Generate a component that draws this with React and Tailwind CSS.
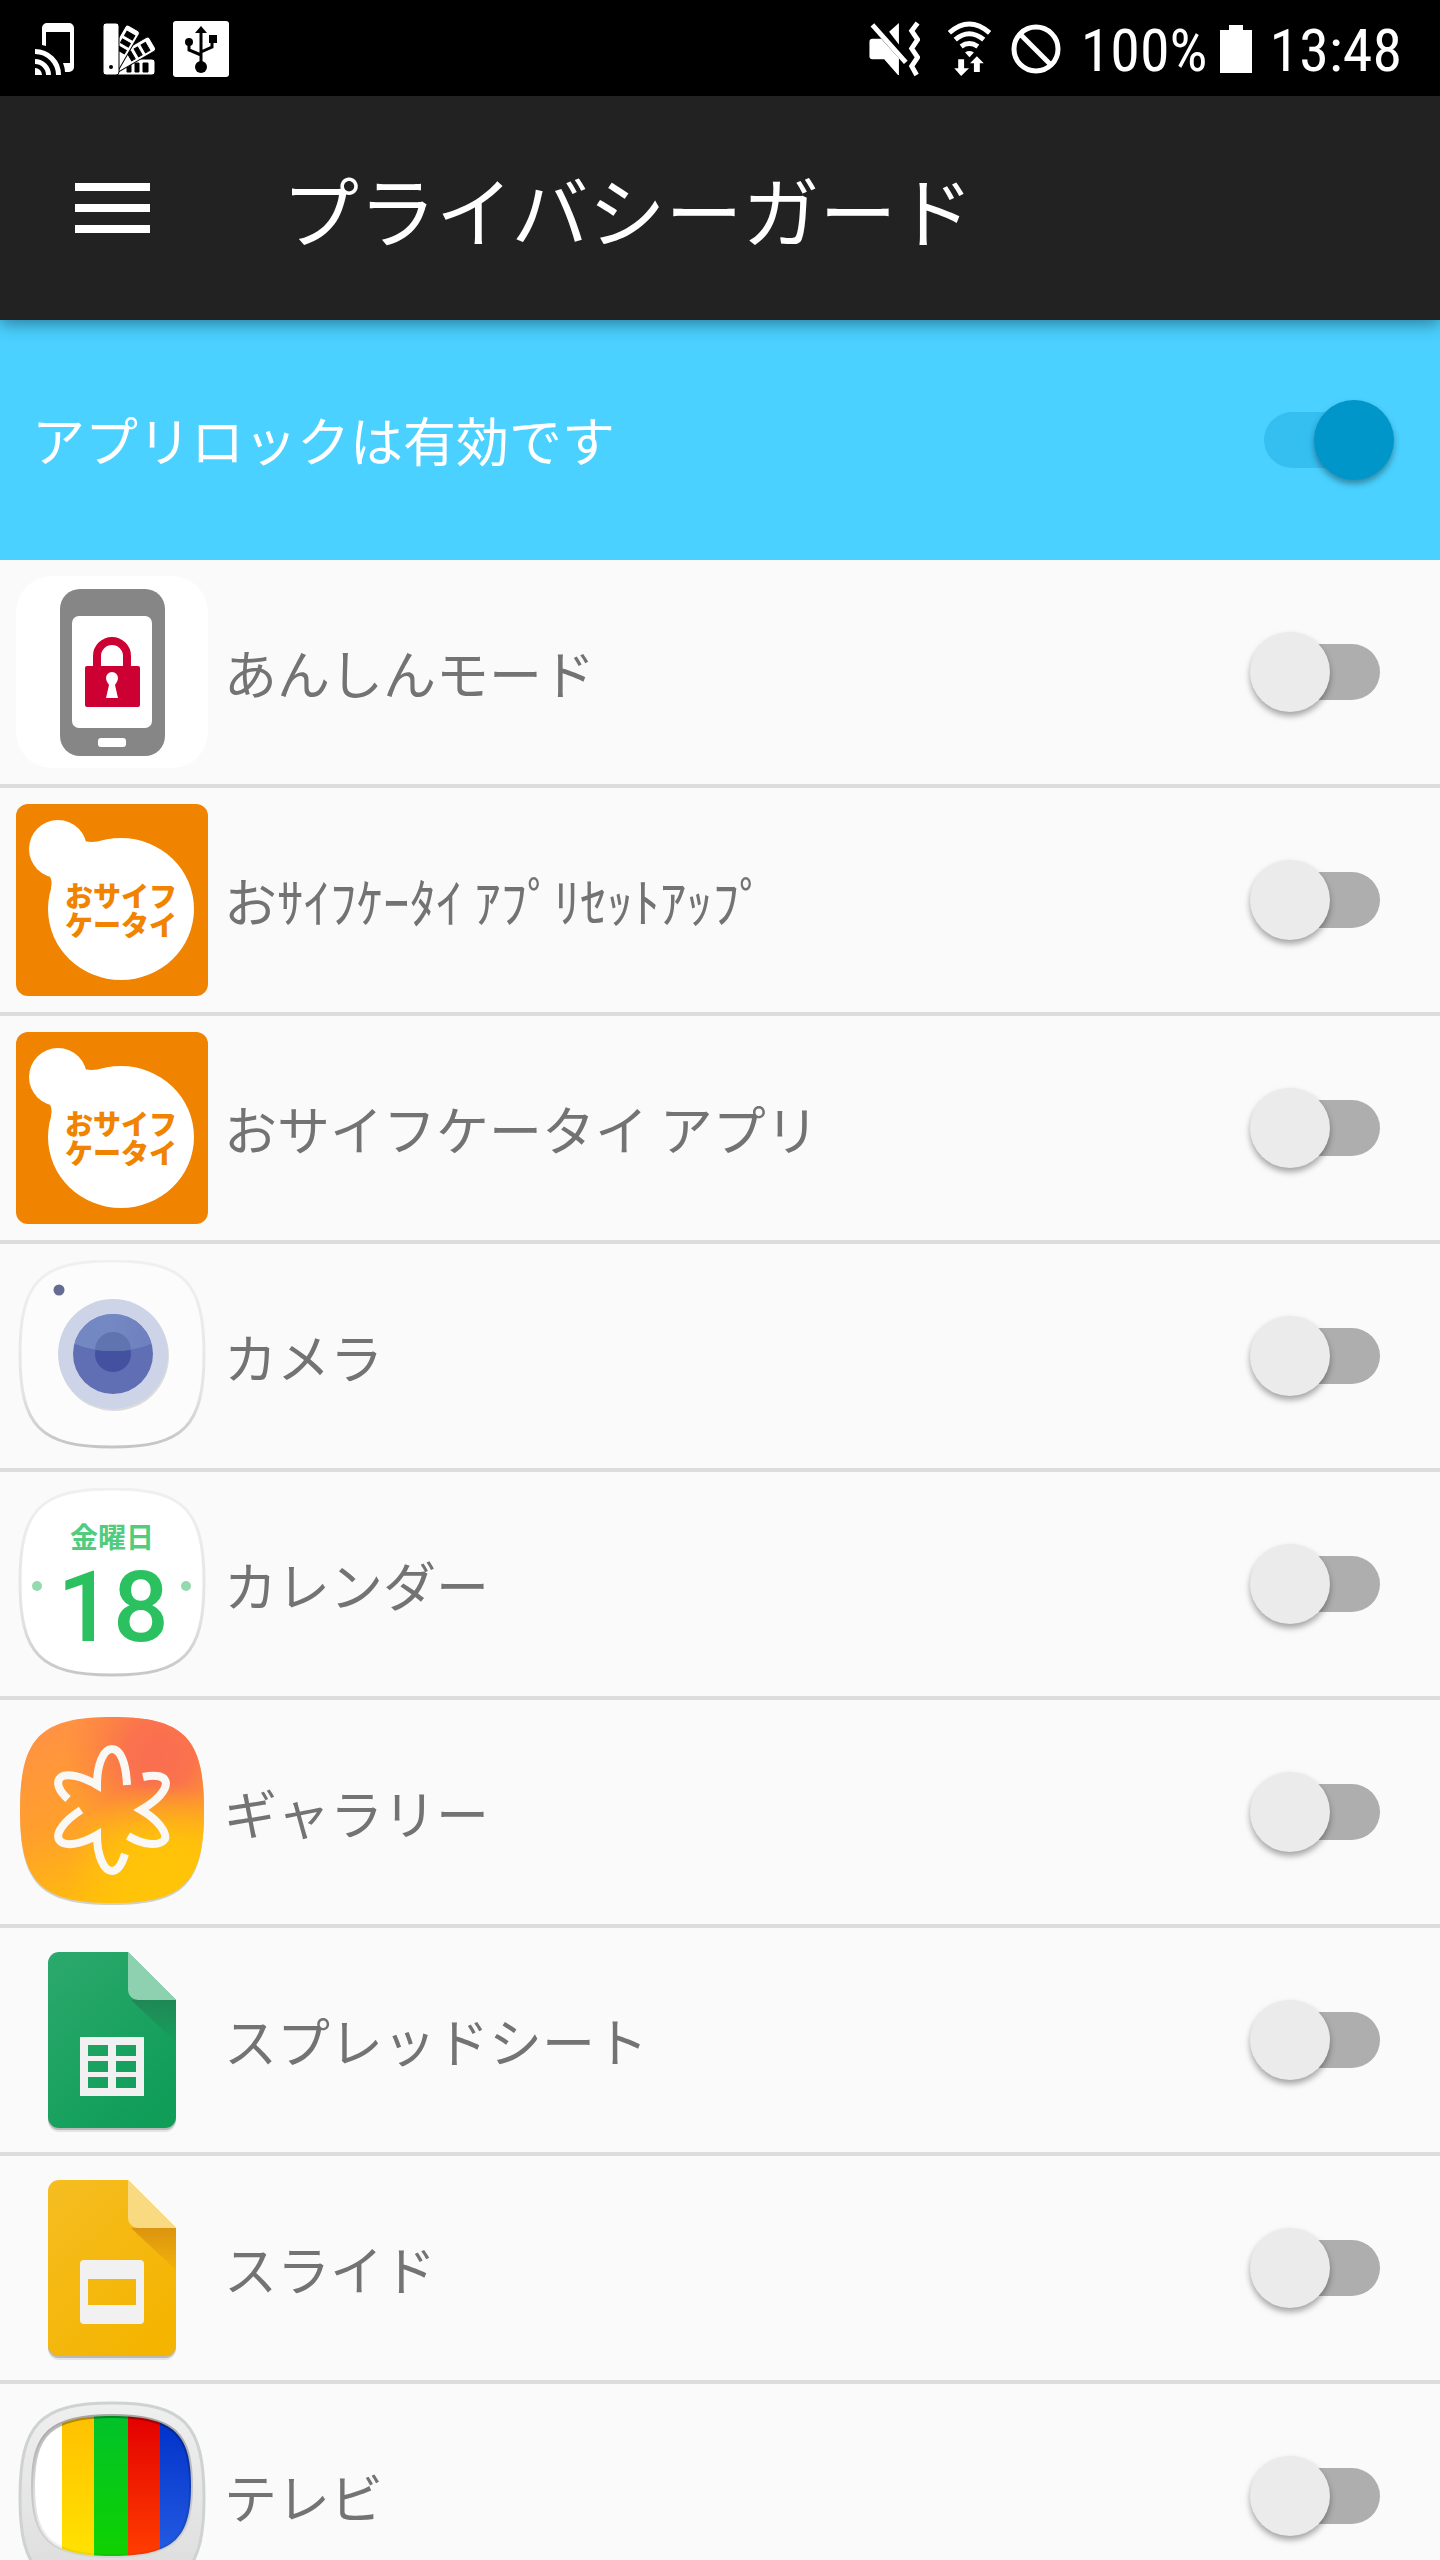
import React, { useState } from "react";

const SQUIRCLE = "M4 94C4 22 24 1 96 1S188 22 188 94 168 187 96 187 4 166 4 94Z";

function AppIcon({ children }) {
  return (
    <svg viewBox="0 0 192 192" className="size-48 shrink-0" aria-hidden="true">
      {children}
    </svg>
  );
}

function SafeModeIcon() {
  return (
    <AppIcon>
      <rect width="192" height="192" rx="36" fill="#fff" />
      <rect x="44" y="13" width="105" height="167" rx="20" fill="#868686" />
      <rect x="56" y="40" width="80" height="112" rx="7" fill="#fff" />
      <rect x="82" y="162" width="28" height="9" rx="3" fill="#fff" />
      <path d="M81 92V80a15 15 0 0 1 30 0v12" fill="none" stroke="#cc0033" strokeWidth="8" />
      <rect x="69" y="90" width="55" height="41" rx="2" fill="#cc0033" />
      <path d="M96 96a6 6 0 0 0-6 6c0 3 2 5 3 7l-3 13h12l-3-13c1-2 3-4 3-7a6 6 0 0 0-6-6Z" fill="#fff" />
    </AppIcon>
  );
}

function WalletIcon() {
  return (
    <AppIcon>
      <rect width="192" height="192" rx="12" fill="#f08300" />
      <circle cx="42" cy="45" r="29" fill="#fff" />
      <path d="M60 30C66 38 72 40 90 36L60 110 35 84C37 76 34 70 28 68Z" fill="#fff" />
      <ellipse cx="105" cy="105" rx="73" ry="71" fill="#fff" />
      <g
        fill="#f08300"
        fontSize="28"
        fontWeight="900"
        textAnchor="middle"
        fontFamily="'Liberation Sans', 'Noto Sans CJK JP', sans-serif"
      >
        <text x="105" y="103">おサイフ</text>
        <text x="105" y="132">ケータイ</text>
      </g>
    </AppIcon>
  );
}

function CameraIcon() {
  return (
    <AppIcon>
      <defs>
        <linearGradient id="camEdge" x1="0" y1="0" x2="0" y2="1">
          <stop offset="0" stopColor="#f0f0f0" />
          <stop offset="0.7" stopColor="#e4e4e4" />
          <stop offset="1" stopColor="#c4c4c4" />
        </linearGradient>
        <linearGradient id="camShine" x1="0" y1="0" x2="1" y2="0">
          <stop offset="0" stopColor="#7285c0" />
          <stop offset="0.45" stopColor="#7489c3" />
          <stop offset="1" stopColor="#6c7dbd" />
        </linearGradient>
        <clipPath id="camLens">
          <circle cx="97" cy="94" r="40" />
        </clipPath>
      </defs>
      <path d={SQUIRCLE} fill="#fcfcfc" stroke="url(#camEdge)" strokeWidth="3" />
      <circle cx="43" cy="30" r="5.5" fill="#666b93" />
      <circle cx="98" cy="96" r="55" fill="#dcdcdc" />
      <circle cx="97" cy="94" r="55" fill="#cdd4e8" />
      <circle cx="97" cy="94" r="40" fill="#606fb4" />
      <circle cx="97" cy="94" r="18" fill="#4450a0" />
      <g clipPath="url(#camLens)">
        <ellipse cx="97" cy="66" rx="54" ry="25" fill="url(#camShine)" />
        <path d="M79 90a18 18 0 0 1 36 0q-18 2-36 0Z" fill="#6074b0" />
      </g>
    </AppIcon>
  );
}

function CalendarIcon() {
  return (
    <AppIcon>
      <defs>
        <linearGradient id="calEdge" x1="0" y1="0" x2="0" y2="1">
          <stop offset="0" stopColor="#f0f0f0" />
          <stop offset="0.7" stopColor="#e2e2e2" />
          <stop offset="1" stopColor="#c6c6c6" />
        </linearGradient>
      </defs>
      <path d={SQUIRCLE} fill="#fff" stroke="url(#calEdge)" strokeWidth="3" />
      <text
        x="96"
        y="60"
        textAnchor="middle"
        fontSize="28"
        fontWeight="700"
        fontFamily="'Liberation Sans', 'Noto Sans CJK JP', sans-serif"
        fill="#52cc7c"
      >
        金曜日
      </text>
      <text
        x="97"
        y="153"
        textAnchor="middle"
        fontSize="98"
        fontWeight="500"
        fontFamily="Roboto, sans-serif"
        fill="#2bc160"
      >
        18
      </text>
      <circle cx="21" cy="98" r="5" fill="#93dbae" />
      <circle cx="170" cy="98" r="5" fill="#93dbae" />
    </AppIcon>
  );
}

function GalleryIcon() {
  return (
    <AppIcon>
      <defs>
        <linearGradient id="galBase" x1="0.2" y1="0" x2="0.6" y2="1">
          <stop offset="0" stopColor="#ff9145" />
          <stop offset="0.5" stopColor="#ff9f2c" />
          <stop offset="1" stopColor="#ffc107" />
        </linearGradient>
        <radialGradient id="galRed" cx="0.76" cy="0.2" r="0.52">
          <stop offset="0" stopColor="#fa6e50" />
          <stop offset="0.35" stopColor="#fa6e50" stopOpacity="0.9" />
          <stop offset="1" stopColor="#fa7a45" stopOpacity="0" />
        </radialGradient>
        <radialGradient id="galYellow" cx="0.76" cy="0.85" r="0.5">
          <stop offset="0" stopColor="#ffc408" />
          <stop offset="0.4" stopColor="#ffc408" stopOpacity="0.85" />
          <stop offset="1" stopColor="#ffc408" stopOpacity="0" />
        </radialGradient>
      </defs>
      <path d={SQUIRCLE} transform="translate(0 2)" fill="#d2cfc8" />
      <path d={SQUIRCLE} fill="url(#galBase)" />
      <path d={SQUIRCLE} fill="url(#galRed)" />
      <path d={SQUIRCLE} fill="url(#galYellow)" />
      <g fill="none" stroke="#faf8f5" strokeWidth="8">
        <path d="M111 69C110 46 104 33 96 33 88 33 81 47 81 69 66 60 51 57 45 61 39 66 43 75 52 83" />
        <path d="M65 94C48 105 38 118 44 125 50 131 66 128 81 119 81 140 88 155 96 155 102 155 106 148 109 138" />
        <path d="M127 61C140 58 149 60 150 67 150 75 140 85 125 94 141 103 151 116 149 123 144 131 127 129 112 120" />
      </g>
    </AppIcon>
  );
}

function DocumentIcon({ id, light, dark, fold, shade, children }) {
  return (
    <AppIcon>
      <defs>
        <linearGradient id={id} x1="0" y1="0" x2="0.7" y2="1">
          <stop offset="0" stopColor={light} />
          <stop offset="1" stopColor={dark} />
        </linearGradient>
        <linearGradient id={id + "Shade"} x1="0" y1="0" x2="0" y2="1">
          <stop offset="0" stopColor={shade} stopOpacity="0.9" />
          <stop offset="1" stopColor={shade} stopOpacity="0.1" />
        </linearGradient>
      </defs>
      <rect x="32" y="100" width="128" height="88" rx="11" fill="#e4e4e4" />
      <rect x="32" y="100" width="128" height="86" rx="11" fill="#b9b9b9" />
      <path d="M43 8h69l48 48v117a11 11 0 0 1-11 11H43a11 11 0 0 1-11-11V19A11 11 0 0 1 43 8Z" fill={"url(#" + id + ")"} />
      <path d="M115 56h45v42Z" fill={"url(#" + id + "Shade)"} />
      <path d="M112 8l48 48h-38a10 10 0 0 1-10-10Z" fill={fold} />
      {children}
    </AppIcon>
  );
}

function SheetsIcon() {
  return (
    <DocumentIcon id="sheet" light="#2ca96d" dark="#0f9d58" fold="#8ed1b1" shade="#1f8553">
      <path
        fillRule="evenodd"
        fill="#f1f1f1"
        d="M64 93h64v59H64ZM72 101v11h20v-11ZM100 101v11h20v-11ZM72 117v11h20v-11ZM100 117v11h20v-11ZM72 133v11h20v-11ZM100 133v11h20v-11Z"
      />
    </DocumentIcon>
  );
}

function SlidesIcon() {
  return (
    <DocumentIcon id="slide" light="#f6bd22" dark="#f4b400" fold="#fada80" shade="#d9900f">
      <path
        fillRule="evenodd"
        fill="#f1f1f1"
        d="M68 88h56a4 4 0 0 1 4 4v56a4 4 0 0 1-4 4H68a4 4 0 0 1-4-4V92a4 4 0 0 1 4-4ZM72 107v26h48v-26Z"
      />
    </DocumentIcon>
  );
}

function TvIcon() {
  const screen = "M17 86C17 34 34 16 96 16S175 34 175 86 158 156 96 156 17 138 17 86Z";
  return (
    <AppIcon>
      <defs>
        <linearGradient id="tvFrame" x1="0" y1="0" x2="0" y2="1">
          <stop offset="0" stopColor="#efefef" />
          <stop offset="1" stopColor="#dcdcdc" />
        </linearGradient>
        <linearGradient id="tvYellow" x1="0" y1="0" x2="0" y2="1">
          <stop offset="0" stopColor="#ffc000" />
          <stop offset="1" stopColor="#ffe200" />
        </linearGradient>
        <linearGradient id="tvGreen" x1="0" y1="0" x2="0" y2="1">
          <stop offset="0" stopColor="#00c22a" />
          <stop offset="1" stopColor="#10d200" />
        </linearGradient>
        <linearGradient id="tvRed" x1="0" y1="0" x2="0" y2="1">
          <stop offset="0" stopColor="#e30000" />
          <stop offset="1" stopColor="#ff3e00" />
        </linearGradient>
        <linearGradient id="tvBlue" x1="0" y1="0" x2="0" y2="1">
          <stop offset="0" stopColor="#0030c8" />
          <stop offset="1" stopColor="#245ce2" />
        </linearGradient>
        <linearGradient id="tvInner" x1="0" y1="0" x2="0" y2="1">
          <stop offset="0" stopColor="#000" stopOpacity="0.3" />
          <stop offset="0.5" stopColor="#000" stopOpacity="0.15" />
          <stop offset="1" stopColor="#000" stopOpacity="0.05" />
        </linearGradient>
        <clipPath id="tvClip">
          <path d={screen} />
        </clipPath>
      </defs>
      <path
        d="M4 98C4 24 24 3 96 3S188 24 188 98 168 191 96 191 4 170 4 98Z"
        fill="url(#tvFrame)"
        stroke="#cfd2d2"
        strokeWidth="3"
      />
      <g clipPath="url(#tvClip)">
        <rect x="16" y="16" width="30" height="140" fill="#fff" />
        <rect x="46" y="16" width="32" height="140" fill="url(#tvYellow)" />
        <rect x="78" y="16" width="34" height="140" fill="url(#tvGreen)" />
        <rect x="112" y="16" width="32" height="140" fill="url(#tvRed)" />
        <rect x="144" y="16" width="32" height="140" fill="url(#tvBlue)" />
      </g>
      <path d={screen} fill="none" stroke="url(#tvInner)" strokeWidth="4" />
    </AppIcon>
  );
}

function CastIcon() {
  return (
    <svg viewBox="0 0 40 52" className="h-[52px] w-10" aria-hidden="true">
      <path
        fill="#fff"
        fillRule="evenodd"
        d="M12 0h22a5 5 0 0 1 5 5v39a5 5 0 0 1-5 5h-4q0-4-2-9h7V9H11v14l-4-1V5a5 5 0 0 1 5-5Z"
      />
      <g fill="none" stroke="#fff" strokeWidth="5">
        <path d="M0 28.500A23.500 23.500 0 0 1 23.500 52" />
        <path d="M0 38.500A13.500 13.500 0 0 1 13.500 52" />
      </g>
      <path d="M0 45a7 7 0 0 1 7 7H0Z" fill="#fff" />
    </svg>
  );
}

function SwatchIcon() {
  return (
    <svg viewBox="0 0 52 52" className="size-[52px]" aria-hidden="true">
      <g stroke="#000" strokeWidth="1">
        <g transform="rotate(90 8 44)">
          <rect x="0" y="0" width="16" height="52" rx="3" fill="#fff" />
          <path d="M4 7h9v5H4ZM4 16h9v4H4ZM4 24h9v4H4Z" fill="#000" />
        </g>
        <g transform="rotate(60 8 44)">
          <rect x="0" y="-4" width="16" height="56" rx="3" fill="#fff" />
          <path d="M4 2h9v5H4ZM4 11h9v4H4ZM4 19h9v4H4Z" fill="#000" />
        </g>
        <g transform="rotate(30 8 44)">
          <rect x="0" y="-1" width="16" height="53" rx="3" fill="#fff" />
          <path d="M4 5h9v5H4ZM4 14h9v4H4ZM4 22h9v4H4Z" fill="#000" />
        </g>
        <rect x="0" y="0" width="16" height="52" rx="3" fill="#fff" />
      </g>
      <circle cx="8" cy="44" r="2" fill="#000" />
    </svg>
  );
}

function UsbIcon() {
  return (
    <svg viewBox="0 0 56 56" className="size-14" aria-hidden="true">
      <rect width="56" height="56" rx="3" fill="#fff" />
      <path d="M28 5l6 7H22Z" />
      <path d="M28 10v36M28 34l-12-5v-8M28 31l11-5v-6" fill="none" stroke="#000" strokeWidth="3" />
      <circle cx="28" cy="46" r="6" />
      <circle cx="16" cy="21" r="4" />
      <rect x="36" y="14" width="8" height="8" />
    </svg>
  );
}

function MuteVibrateIcon() {
  return (
    <svg viewBox="0 0 51 57" className="h-14 w-[51px]" aria-hidden="true">
      <path d="M30 2v22L20 11ZM3 18h9l18 20v17h-1L15 39H3a3 3 0 0 1-3-3V21a3 3 0 0 1 3-3Z" fill="#fff" />
      <path d="M3 4l34 38" stroke="#fff" strokeWidth="5" />
      <path d="M49 2l-6 8 6 9-6 9 6 9-6 9 5 9" fill="none" stroke="#fff" strokeWidth="5" />
    </svg>
  );
}

function WifiIcon() {
  return (
    <svg viewBox="0 0 43 57" className="h-14 w-[43px]" aria-hidden="true">
      <g fill="none" stroke="#fff" strokeWidth="5">
        <path d="M1 12Q21 -6 42 12" />
        <path d="M7 19Q21 7 36 19" />
        <path d="M13 26Q21 20 30 26" />
      </g>
      <path d="M17 32q4-3 9 0l-4.500 5Z" fill="#fff" />
      <path d="M10 39h6v9h5l-8 8-7-8h4ZM26 52h6V43h4l-7-7-7 7h4Z" fill="#fff" />
    </svg>
  );
}

function BlockedIcon() {
  return (
    <svg viewBox="0 0 50 50" className="size-[50px]" aria-hidden="true">
      <circle cx="25" cy="25" r="22" fill="none" stroke="#fff" strokeWidth="5" />
      <path d="M9 10l31 31" stroke="#fff" strokeWidth="5" />
    </svg>
  );
}

function BatteryIcon() {
  return (
    <svg viewBox="0 0 32 48" className="h-12 w-8" aria-hidden="true">
      <path d="M9 0h14v5h9v43H0V5h9Z" fill="#fff" />
    </svg>
  );
}

function StatusBar() {
  return (
    <div className="flex h-24 shrink-0 items-center justify-between bg-black pt-0.5 pr-[38px] pl-[35px] text-white">
      <div className="flex items-center gap-7">
        <CastIcon />
        <div className="flex items-center gap-[18px]">
          <SwatchIcon />
          <UsbIcon />
        </div>
      </div>
      <div className="flex items-center font-['Roboto_Condensed','Liberation_Sans_Narrow',Roboto,sans-serif] text-[60px] leading-none">
        <div className="flex items-center gap-5 pr-5">
          <span className="pr-2">
            <MuteVibrateIcon />
          </span>
          <WifiIcon />
          <BlockedIcon />
        </div>
        <span className="pt-1">100%</span>
        <span className="pr-[18px] pl-3">
          <BatteryIcon />
        </span>
        <span className="pt-1">13:48</span>
      </div>
    </div>
  );
}

const SWITCH_CLASS =
  "grid h-20 w-36 shrink-0 cursor-pointer appearance-none items-center before:col-start-1 before:row-start-1 before:mx-[14px] before:h-14 before:rounded-full before:bg-[#aeaeae] before:content-[''] after:col-start-1 after:row-start-1 after:size-20 after:rounded-full after:bg-[#ebebeb] after:shadow-[0_4px_6px_rgba(0,0,0,0.35)] after:content-[''] checked:before:bg-[#35bff1] checked:after:justify-self-end checked:after:bg-[#0096c9]";

function Switch({ id, checked, onChange }) {
  return (
    <input
      id={id}
      type="checkbox"
      role="switch"
      checked={checked}
      onChange={(event) => onChange(event.target.checked)}
      className={SWITCH_CLASS}
    />
  );
}

const APPS = [
  { id: "safe-mode", name: "あんしんモード", Icon: SafeModeIcon },
  { id: "wallet-setup", name: "おｻｲﾌｹｰﾀｲ ｱﾌﾟﾘｾｯﾄｱｯﾌﾟ", Icon: WalletIcon },
  { id: "wallet", name: "おサイフケータイ アプリ", Icon: WalletIcon },
  { id: "camera", name: "カメラ", Icon: CameraIcon },
  { id: "calendar", name: "カレンダー", Icon: CalendarIcon },
  { id: "gallery", name: "ギャラリー", Icon: GalleryIcon },
  { id: "sheets", name: "スプレッドシート", Icon: SheetsIcon },
  { id: "slides", name: "スライド", Icon: SlidesIcon },
  { id: "tv", name: "テレビ", Icon: TvIcon },
];

export default function App() {
  const [enabled, setEnabled] = useState(true);
  const [locked, setLocked] = useState({});

  return (
    <div
      lang="ja"
      className="flex h-screen flex-col overflow-hidden bg-[#fafafa] font-['Noto_Sans_CJK_JP',sans-serif]"
    >
      <StatusBar />
      <header className="z-10 flex h-56 shrink-0 items-center gap-[132px] bg-[#222222] px-[75px] text-white shadow-[0_4px_16px_rgba(0,0,0,0.4)]">
        <button type="button" aria-label="メニュー" className="cursor-pointer">
          <svg viewBox="0 0 75 50" className="h-[50px] w-[75px]" aria-hidden="true">
            <path d="M0 0h75v8H0ZM0 21h75v8H0ZM0 42h75v8H0Z" fill="#fff" />
          </svg>
        </button>
        <h1 className="text-[77px] leading-none whitespace-nowrap">プライバシーガード</h1>
      </header>
      <main className="min-h-0 flex-1">
        <div className="flex h-60 items-center justify-between bg-[#4ad1ff] pr-[46px] pl-8 text-[53px] text-white">
          <label htmlFor="app-lock">アプリロックは有効です</label>
          <Switch id="app-lock" checked={enabled} onChange={setEnabled} />
        </div>
        <ul className="divide-y-4 divide-[#dcdcdc]">
          {APPS.map(({ id, name, Icon }) => (
            <li key={id} className="flex items-center gap-4 pr-[46px] pl-4">
              <Icon />
              <label htmlFor={id} className="flex-1 py-4 text-[53px] leading-[192px] text-[#737373]">
                {name}
              </label>
              <Switch
                id={id}
                checked={Boolean(locked[id])}
                onChange={(value) => setLocked({ ...locked, [id]: value })}
              />
            </li>
          ))}
        </ul>
      </main>
    </div>
  );
}
